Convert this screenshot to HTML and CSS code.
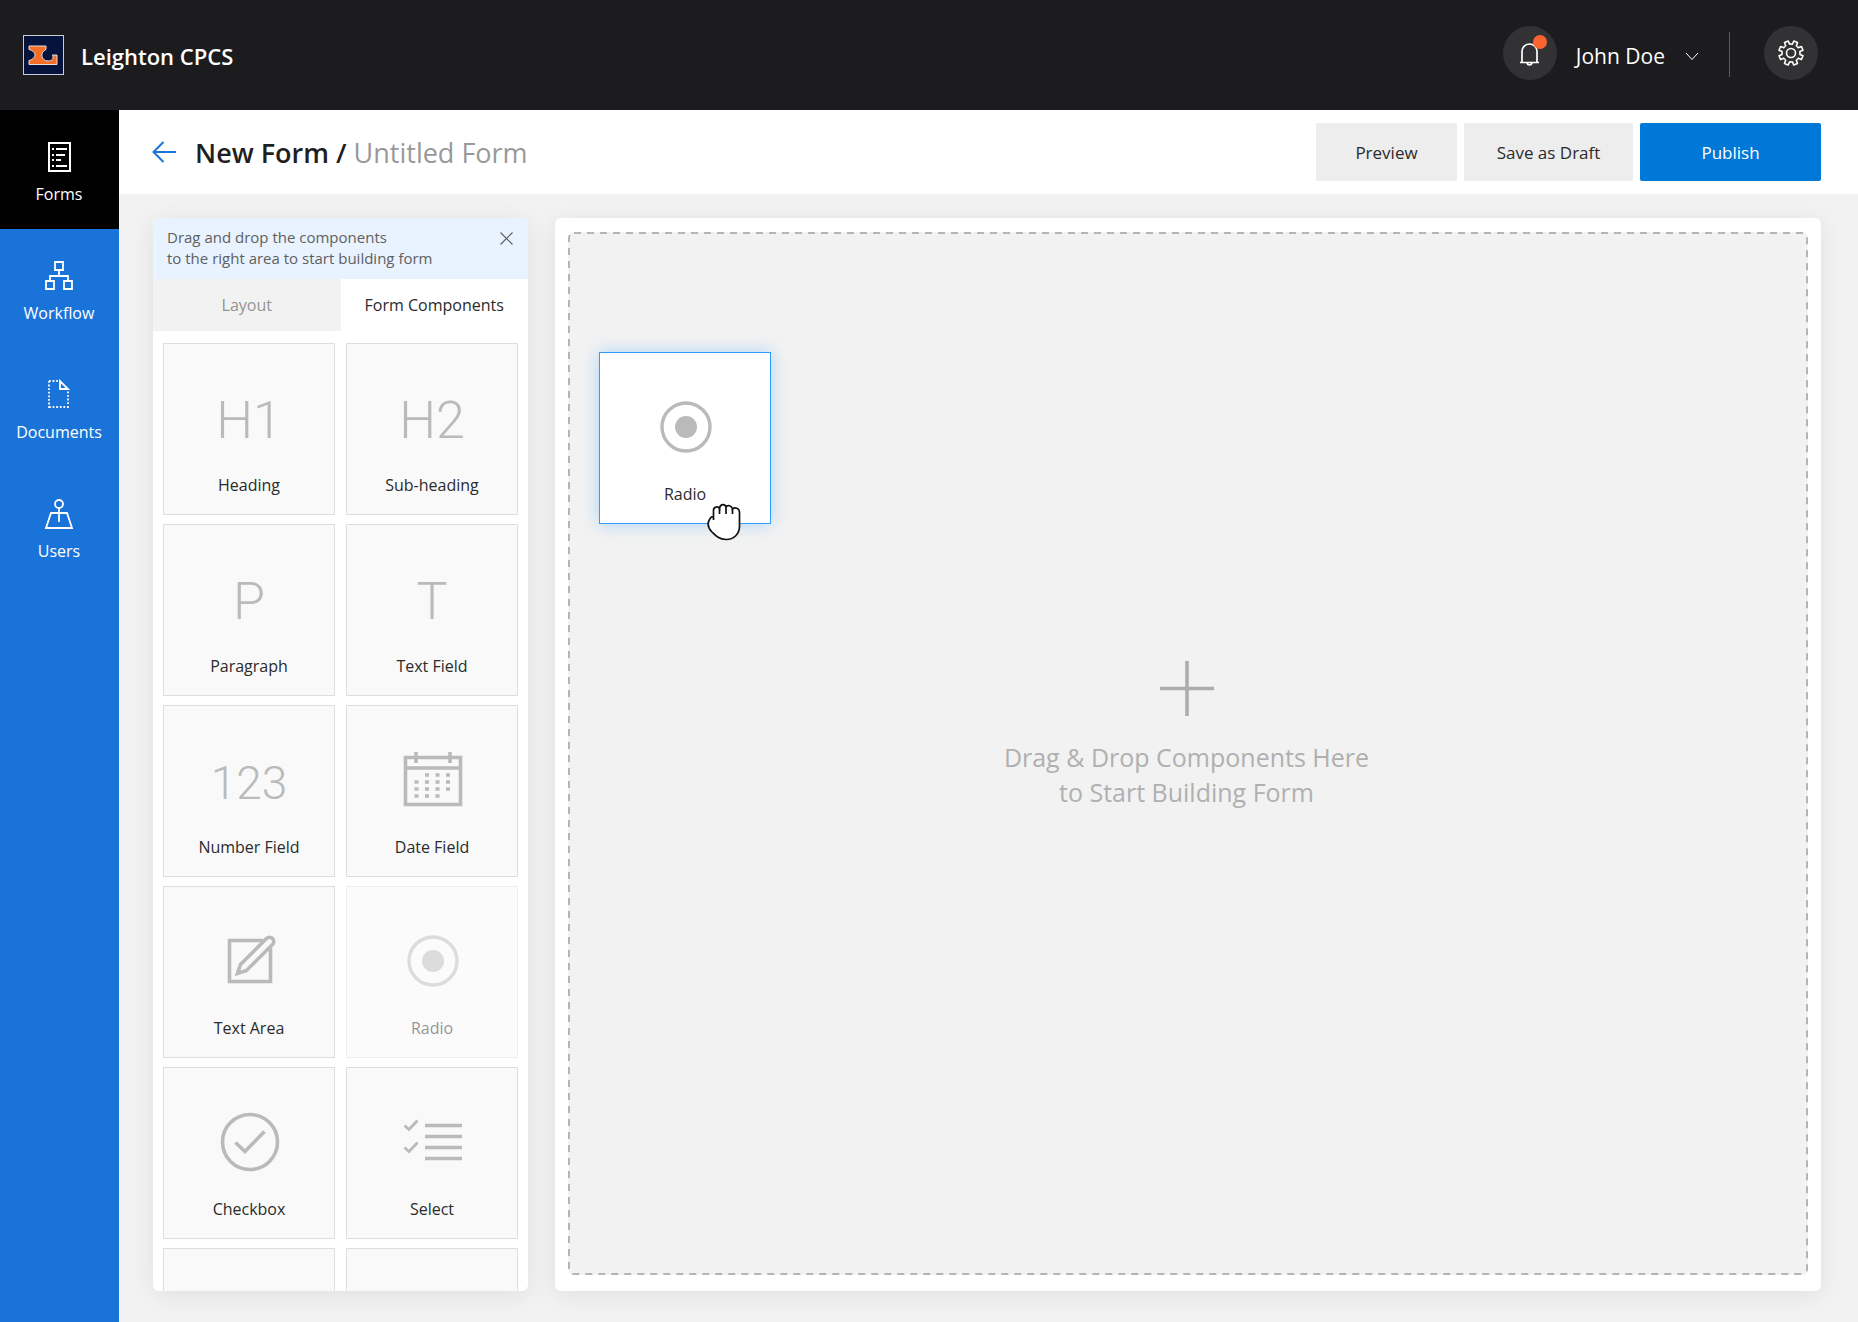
FILE: index.html
```html
<!DOCTYPE html>
<html lang="en">
<head>
<meta charset="utf-8">
<meta name="viewport" content="width=device-width, initial-scale=1">
<title>New Form - Leighton CPCS</title>
<link rel="stylesheet" href="styles.css">
</head>
<body>
<svg class="defs" aria-hidden="true">
  <symbol id="icon-radio" viewBox="0 0 60 60">
    <circle cx="30" cy="30" r="24" fill="none" stroke="currentColor" stroke-width="3.400"/>
    <circle cx="30" cy="30" r="11" fill="currentColor"/>
  </symbol>
</svg>
<div class="app">
  <header class="header">
    <a class="brand" href="#">
      <svg class="brand-logo" viewBox="0 0 41 40" aria-hidden="true">
        <rect x="0.5" y="0.5" width="40" height="39" fill="#06133c" stroke="#c9ccd6"/>
        <path d="M6 11H23V14.500C16.500 17 18 26 25 26C29 26 31 23.500 29.500 20H34V29.500H6V25.500C9.500 24.500 12 22.500 12 20C12 17.500 9.500 15.500 6 14.500Z" fill="#f57026" stroke="#e3dde0" stroke-width="1"/>
      </svg>
      <span class="brand-name">Leighton CPCS</span>
    </a>
    <div class="header-tools">
      <button class="round" type="button" aria-label="Notifications">
        <svg width="28" height="28" viewBox="0 0 28 28" fill="none" stroke="#fff" stroke-width="1.700" aria-hidden="true">
          <path d="M4 23.500H23M6 23.500V12.500A7.500 7.500 0 0 1 21 12.500V23.500M11 24A2.600 2.600 0 0 0 16 24"/>
        </svg>
        <span class="dot"></span>
      </button>
      <button class="user" type="button">
        <span>John Doe</span>
        <svg width="14" height="9" viewBox="0 0 14 9" fill="none" stroke="#fff" stroke-width="1" aria-hidden="true"><path d="M1 1L7 7.500L13 1"/></svg>
      </button>
      <span class="divider"></span>
      <button class="round" type="button" aria-label="Settings">
        <svg width="28" height="28" viewBox="-14 -14 28 28" fill="none" stroke="#fff" stroke-width="1.600" stroke-linejoin="round" aria-hidden="true">
          <path id="tooth" d="M0 -9L1.400 -8.900L2.800 -12L6.500 -10.400L5.300 -7.300L6.360 -6.360"/>
          <use href="#tooth" transform="rotate(45)"/><use href="#tooth" transform="rotate(90)"/><use href="#tooth" transform="rotate(135)"/><use href="#tooth" transform="rotate(180)"/><use href="#tooth" transform="rotate(225)"/><use href="#tooth" transform="rotate(270)"/><use href="#tooth" transform="rotate(315)"/>
          <circle r="4.500"/>
        </svg>
      </button>
    </div>
  </header>

  <div class="body">
    <nav class="sidebar" aria-label="Main">
      <a class="nav-item active" href="#">
        <svg viewBox="0 0 32 32" fill="none" stroke="#fff" stroke-width="2" aria-hidden="true">
          <path d="M6 2H27V30H6Z"/><path d="M9 8H11M9 14H11M9 19H11M9 25H11M13 8H24M13 14H22M13 19H18M13 25H24"/>
        </svg>
        <span>Forms</span>
      </a>
      <a class="nav-item" href="#">
        <svg viewBox="0 0 32 32" fill="none" stroke="#fff" stroke-width="1.800" aria-hidden="true">
          <path d="M12 2H20V10H12ZM3 21H11V29H3ZM21 21H29V29H21ZM16 10V16M7 21V16H25V21"/>
        </svg>
        <span>Workflow</span>
      </a>
      <a class="nav-item" href="#">
        <svg viewBox="0 0 32 32" fill="none" stroke="#fff" stroke-width="1.800" aria-hidden="true">
          <path d="M6 2H17M6 2V29M6 28H26M25 25V11" stroke-dasharray="1.800 1.800"/>
          <path d="M17 2V10H25Z"/>
        </svg>
        <span>Documents</span>
      </a>
      <a class="nav-item" href="#">
        <svg viewBox="0 0 32 32" fill="none" stroke="#fff" stroke-width="1.800" aria-hidden="true">
          <circle cx="16" cy="6" r="4"/><path d="M16 10V24M16 15H8L3 30H29L24 15H16"/>
        </svg>
        <span>Users</span>
      </a>
    </nav>

    <main class="main">
      <div class="toolbar">
        <a class="back" href="#" aria-label="Back">
          <svg width="24" height="22" viewBox="0 0 24 22" fill="none" stroke="#1a73d9" stroke-width="2" aria-hidden="true"><path d="M24 11H2M11.500 1L1.500 11L11.500 21"/></svg>
        </a>
        <h1 class="title">New Form / <span>Untitled Form</span></h1>
        <div class="actions">
          <button class="btn btn-preview" type="button">Preview</button>
          <button class="btn btn-draft" type="button">Save as Draft</button>
          <button class="btn btn-publish" type="button">Publish</button>
        </div>
      </div>

      <div class="workspace">
        <aside class="palette">
          <div class="tip">
            <p>Drag and drop the components<br>to the right area to start building form</p>
            <button class="tip-close" type="button" aria-label="Close">
              <svg width="13" height="13" viewBox="0 0 13 13" fill="none" stroke="#606060" stroke-width="1.200" aria-hidden="true"><path d="M0.500 0.500L12.500 12.500M12.500 0.500L0.500 12.500"/></svg>
            </button>
          </div>
          <div class="tabs" role="tablist">
            <button class="tab" type="button" role="tab" aria-selected="false">Layout</button>
            <button class="tab selected" type="button" role="tab" aria-selected="true">Form Components</button>
          </div>
          <div class="cards">
            <div class="card"><span class="glyph">H1</span><span class="label">Heading</span></div>
            <div class="card"><span class="glyph">H2</span><span class="label">Sub-heading</span></div>
            <div class="card"><span class="glyph">P</span><span class="label">Paragraph</span></div>
            <div class="card"><span class="glyph">T</span><span class="label">Text Field</span></div>
            <div class="card"><span class="glyph number">123</span><span class="label">Number Field</span></div>
            <div class="card">
              <svg class="icon" viewBox="0 0 60 60" fill="none" stroke="currentColor" stroke-width="3.600" aria-hidden="true">
                <path d="M2.500 7.500H57.500V54.500H2.500ZM2.500 18H57.500M13 2V13M47 2V13"/>
                <path d="M21 25H25M31.500 25H35.500M42 25H46M10.500 32H14.500M21 32H25M31.500 32H35.500M42 32H46M10.500 39H14.500M21 39H25M31.500 39H35.500M42 39H46M10.500 46H14.500M21 46H25M31.500 46H35.500" transform="translate(1)"/>
              </svg>
              <span class="label">Date Field</span>
            </div>
            <div class="card">
              <svg class="icon" viewBox="0 0 60 60" fill="none" stroke="currentColor" stroke-width="3.600" aria-hidden="true">
                <path d="M43 9.500H9.500V50.500H50.500V17"/>
                <path d="M46.500 7.500L20.500 33.500L17.500 42.500L26.500 39.500L52.500 13.500A4 4 0 0 0 46.500 7.500Z"/>
              </svg>
              <span class="label">Text Area</span>
            </div>
            <div class="card dragging">
              <svg class="icon" aria-hidden="true"><use href="#icon-radio"/></svg>
              <span class="label">Radio</span>
            </div>
            <div class="card">
              <svg class="icon" viewBox="0 0 60 60" fill="none" stroke="currentColor" stroke-width="3.600" aria-hidden="true">
                <circle cx="30" cy="30" r="27.500"/><path d="M15.500 30.500L25 39.500L44.500 19.500"/>
              </svg>
              <span class="label">Checkbox</span>
            </div>
            <div class="card">
              <svg class="icon" viewBox="0 0 60 60" fill="none" stroke="currentColor" stroke-width="3.600" aria-hidden="true">
                <path d="M22 13.500H59M22 24.500H59M22 35.500H59M22 46.500H59"/><path d="M1.500 13.500L6 17.500L14.500 8.500M1.500 35.500L6 39.500L14.500 30.500" stroke-width="2.800"/>
              </svg>
              <span class="label">Select</span>
            </div>
            <div class="card"></div>
            <div class="card"></div>
          </div>
        </aside>

        <section class="canvas" aria-label="Form canvas">
          <div class="dropzone">
            <svg class="outline" aria-hidden="true"><rect x="1" y="1" rx="5"/></svg>
            <svg width="54" height="55" viewBox="0 0 54 55" fill="none" stroke="#adadad" stroke-width="3.600" aria-hidden="true"><path d="M27 0V55M0 27.500H54"/></svg>
            <p class="hint">Drag &amp; Drop Components Here<br>to Start Building Form</p>
            <div class="card floating">
              <svg class="icon" aria-hidden="true"><use href="#icon-radio"/></svg>
              <span class="label">Radio</span>
              <svg class="grab" viewBox="0 0 34 38" aria-hidden="true">
                <path d="M6.500 17V7.500C6.500 3.500 11 3 12.500 5.500C13 0.500 18 0.500 19 4C20.500 1.500 25 2.500 25.500 6C27.500 4 32.500 5 32.500 9V23C32.500 31 27 36.500 19 36.500C12 36.500 8.500 32.500 5 29C0.500 24.500 0.500 20 2.500 16.500C3.500 14.500 4.500 13.500 6.500 13" fill="#fff" stroke="#111" stroke-width="1.700"/>
                <path d="M12.500 5.500V11M19 4.500V11M25.500 6V11" fill="none" stroke="#111" stroke-width="1.700"/>
              </svg>
            </div>
          </div>
        </section>
      </div>
    </main>
  </div>
</div>
</body>
</html>
```
FILE: styles.css
```css
* {
  box-sizing: border-box;
}

body {
  margin: 0;
  background: #f2f2f2;
  color: #2b2b2b;
  font-family: "Open Sans", "Noto Sans", sans-serif;
  font-size: 16px;
}

button {
  padding: 0;
  border: 0;
  background: none;
  color: inherit;
  font: inherit;
  cursor: pointer;
}

a {
  color: inherit;
  text-decoration: none;
}

p,
h1 {
  margin: 0;
}

svg {
  display: block;
}

.defs {
  display: none;
}

.app {
  display: flex;
  flex-direction: column;
  height: 100vh;
  min-height: 720px;
}

/* Header */

.header {
  display: flex;
  flex: none;
  align-items: center;
  justify-content: space-between;
  height: 110px;
  padding: 0 40px 0 23px;
  background: #1c1c1e;
  color: #fff;
}

.brand {
  display: flex;
  align-items: center;
  gap: 17px;
  font-size: 22px;
  font-weight: 600;
}

.brand-logo {
  width: 41px;
  height: 40px;
}

.brand-name {
  padding-top: 2px;
}

.header-tools {
  display: flex;
  align-items: center;
  padding-bottom: 4px;
}

.round {
  position: relative;
  display: grid;
  place-items: center;
  width: 54px;
  height: 54px;
  border-radius: 50%;
  background: #323234;
}

.dot {
  position: absolute;
  top: 9px;
  right: 10px;
  width: 14px;
  height: 14px;
  border-radius: 50%;
  background: #f96430;
}

.user {
  display: flex;
  align-items: center;
  gap: 20px;
  margin-left: 19px;
  padding-top: 6px;
  font-size: 21px;
}

.divider {
  width: 1px;
  height: 45px;
  margin: 2px 34px 0 30px;
  background: #5c5c5e;
}

/* Sidebar */

.body {
  display: flex;
  flex: 1;
  min-height: 0;
}

.sidebar {
  flex: none;
  width: 119px;
  background: #1a73d9;
}

.nav-item {
  display: flex;
  flex-direction: column;
  align-items: center;
  gap: 10px;
  height: 119px;
  padding: 31px 1px 0 0;
  color: #fff;
  line-height: 22px;
}

.nav-item svg {
  width: 32px;
  height: 32px;
}

.nav-item.active {
  background: #000;
}

/* Toolbar */

.main {
  display: flex;
  flex: 1;
  flex-direction: column;
  min-width: 0;
}

.toolbar {
  display: flex;
  flex: none;
  align-items: center;
  height: 84px;
  padding: 0 37px 0 33px;
  background: #fff;
}

.title {
  margin-left: 19px;
  color: #1f1f1f;
  font-size: 27px;
  font-weight: 600;
  white-space: nowrap;
}

.title span {
  color: #999;
  font-weight: 400;
}

.actions {
  display: flex;
  gap: 7px;
  margin-left: auto;
}

.btn {
  height: 58px;
  border-radius: 2px;
  background: #ededed;
  font-size: 17px;
}

.btn-preview {
  width: 141px;
}

.btn-draft {
  width: 169px;
}

.btn-publish {
  width: 181px;
  background: #0078d7;
  color: #fff;
}

/* Component palette */

.workspace {
  display: flex;
  flex: 1;
  gap: 27px;
  min-height: 0;
  padding: 24px 37px 31px 34px;
}

.palette,
.canvas {
  border-radius: 6px;
  background: #fff;
  box-shadow: 0 4px 24px rgba(0, 0, 0, 0.08);
}

.palette {
  display: flex;
  flex: none;
  flex-direction: column;
  width: 375px;
  overflow: hidden;
}

.tip {
  display: flex;
  flex: none;
  align-items: flex-start;
  justify-content: space-between;
  padding: 9px 15px 10px 14px;
  background: #e8f3ff;
  color: #606060;
  font-size: 15px;
  line-height: 21px;
}

.tip-close {
  padding: 5px 0;
}

.tabs {
  display: grid;
  flex: none;
  grid-template-columns: 1fr 1fr;
  height: 52px;
}

.tab {
  background: #f2f2f2;
  color: #949494;
}

.tab.selected {
  background: #fff;
  color: #2b2b2b;
}

.cards {
  display: grid;
  flex: 1;
  grid-template-columns: 1fr 1fr;
  grid-auto-rows: 172px;
  gap: 9px 11px;
  min-height: 0;
  padding: 12px 10px 0;
  overflow-y: auto;
  scrollbar-width: none;
}

.card {
  display: flex;
  flex-direction: column;
  align-items: center;
  justify-content: space-between;
  height: 172px;
  padding: 44px 0 18px;
  border: 1px solid #dedede;
  background: #f9f9f9;
  color: #bababa;
}

.card.dragging {
  opacity: 0.5;
}

.icon {
  width: 60px;
  height: 60px;
  margin-left: 2px;
}

.glyph {
  font-family: Roboto, sans-serif;
  font-size: 52px;
  font-weight: 300;
  line-height: 66px;
}

.glyph.number {
  font-size: 46px;
}

.label {
  color: #2b2b2b;
  line-height: 22px;
}

/* Form canvas */

.canvas {
  display: flex;
  flex: 1;
  min-width: 0;
  padding: 14px 13px 16px;
}

.dropzone {
  position: relative;
  display: flex;
  flex: 1;
  flex-direction: column;
  align-items: center;
  justify-content: center;
  gap: 24px;
  padding: 0 3px 37px 0;
  border-radius: 6px;
  background: #f2f2f2;
}

.outline {
  position: absolute;
  inset: 0;
  width: 100%;
  height: 100%;
}

.outline rect {
  width: calc(100% - 2px);
  height: calc(100% - 2px);
  fill: none;
  stroke: #b5b5b5;
  stroke-width: 2px;
  stroke-dasharray: 7 6;
}

.hint {
  color: #b0b0b0;
  font-size: 25px;
  line-height: 35px;
  text-align: center;
}

.floating {
  position: absolute;
  top: 120px;
  left: 31px;
  width: 172px;
  border-color: #2f9dfc;
  background: #fff;
  box-shadow: 0 0 16px rgba(47, 157, 252, 0.35);
}

.grab {
  position: absolute;
  right: 29px;
  bottom: -18px;
  width: 34px;
  height: 38px;
}
```
